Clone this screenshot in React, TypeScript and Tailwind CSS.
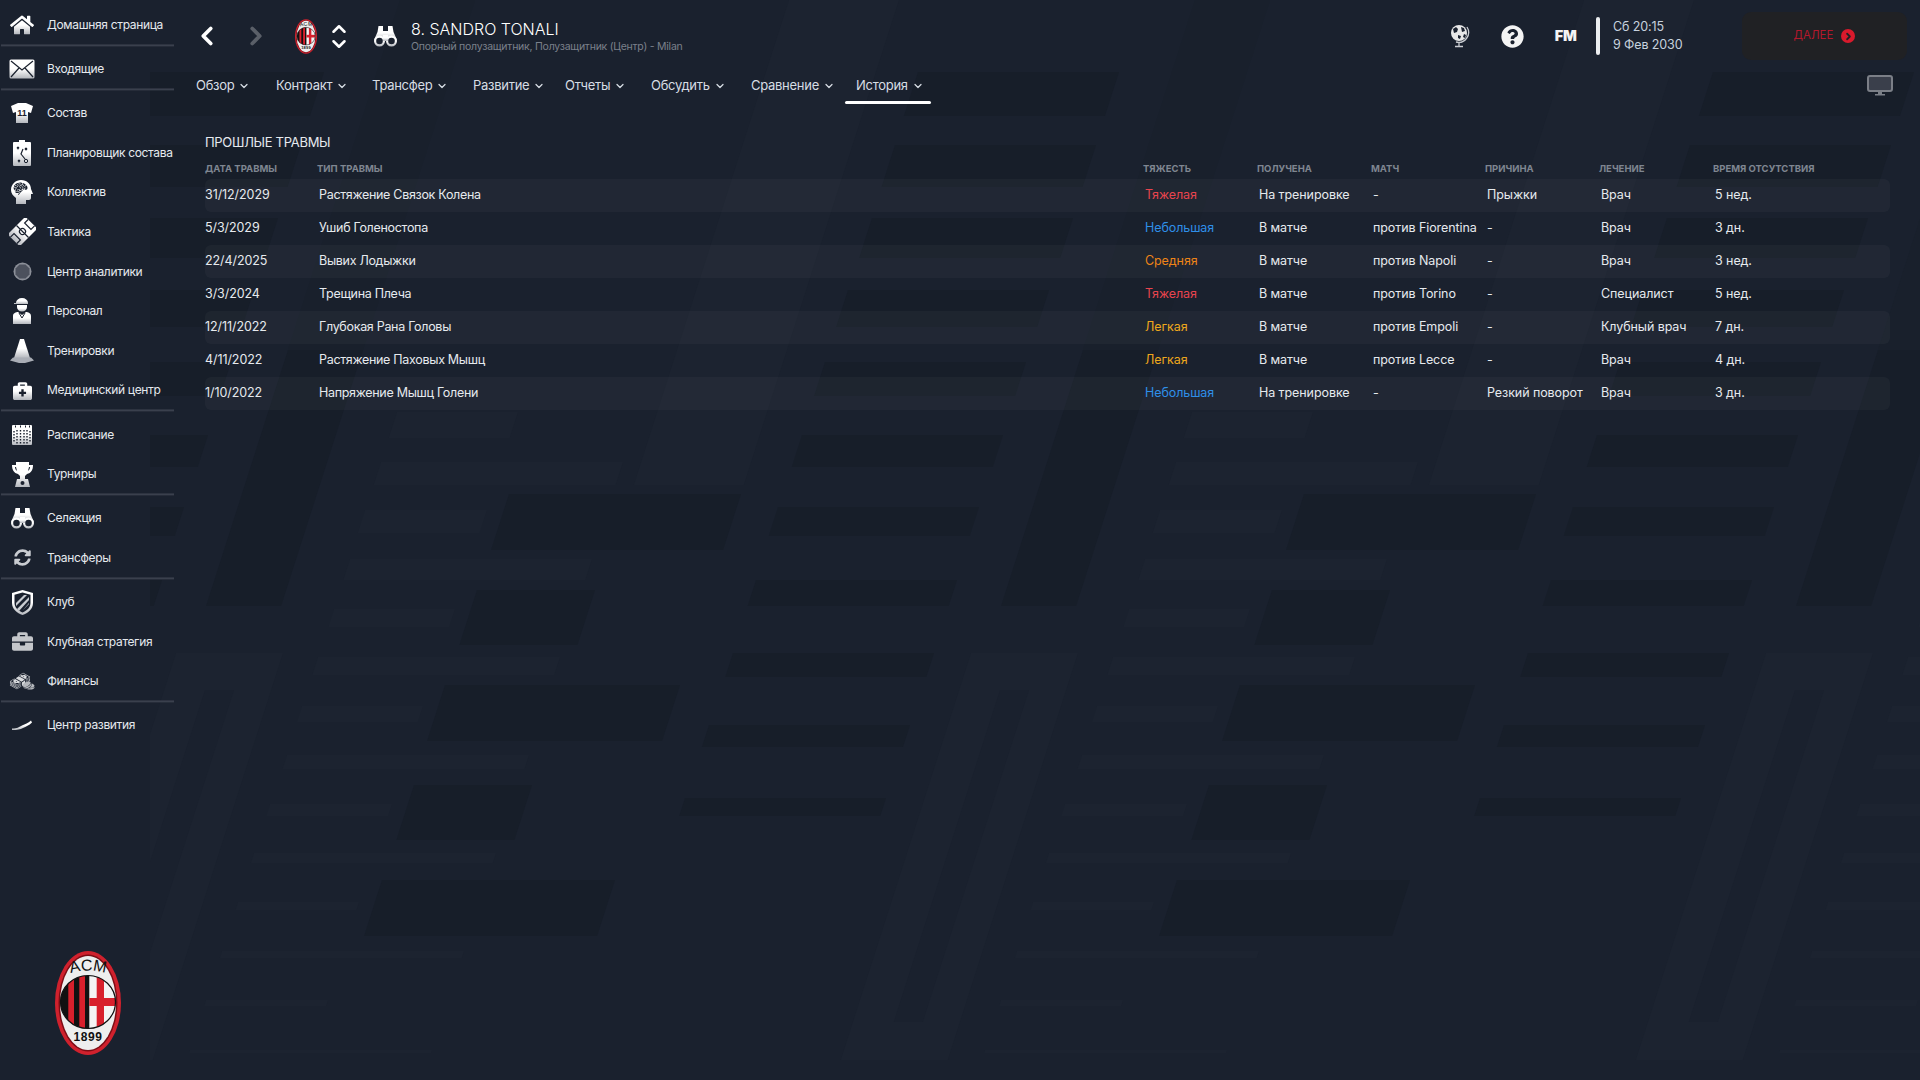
import { ChevronDown, ChevronLeft, ChevronRight, ChevronUp } from 'lucide-react';
import { FaBriefcase, FaBriefcaseMedical, FaHome, FaQuestionCircle, FaSyncAlt } from 'react-icons/fa';
import { GiBrain, GiMoneyStack, GiTwoCoins } from 'react-icons/gi';
import type { ReactNode } from 'react';

const BASE = '#1a212e';
const DARK = '#171e29';
const LIGHT = '#1c2330';
const SLOPE = 0.32;
const PERIOD = 795;

// [x at top edge, y, width, height]
const darkTiles = [
  [509, 494, 232, 56], [477, 590, 118, 55], [445, 685, 235, 56], [414, 785, 118, 55], [382, 880, 233, 56],
  [918, 72, 201, 44], [895, 145, 201, 42], [872, 218, 201, 40], [848, 290, 201, 37], [825, 362, 201, 34],
  [802, 435, 201, 32], [778, 507, 201, 29], [756, 580, 201, 26], [733, 653, 201, 24], [709, 725, 201, 22], [685, 798, 201, 18],
  [288, 350, 75, 256],
];
const lightTiles = [
  [397, 412, 121, 26], [381, 462, 242, 23], [365, 510, 122, 23], [350, 559, 242, 21], [334, 609, 121, 18],
  [318, 657, 242, 18], [302, 706, 121, 16], [287, 755, 242, 14], [270, 804, 122, 12], [254, 853, 242, 10],
  [238, 902, 121, 8], [222, 951, 242, 7], [206, 1000, 122, 6], [190, 1050, 242, 3],
  [789, 0, 110, 485], [176, 653, 107, 407],
];
const faintBars = [[400, 0, 75, 350]];
const innerBars = [[205, 690, 29, 332]];

function tile([x, y, w, h]: number[], offset: number) {
  const left = x + offset;
  const shift = h * SLOPE;
  return `${left},${y} ${left + w},${y} ${left + w - shift},${y + h} ${left - shift},${y + h}`;
}

function Backdrop() {
  const offsets = [-PERIOD, 0, PERIOD, PERIOD * 2];
  return (
    <svg className="absolute left-[150px] top-0 h-[1080px] w-[1770px]" viewBox="150 0 1770 1080">
      {offsets.map((o) => (
        <g key={o}>
          {lightTiles.map((t, i) => <polygon key={i} points={tile(t, o)} fill={LIGHT} />)}
          {faintBars.map((t, i) => <polygon key={i} points={tile(t, o)} fill="#19202c" />)}
          {darkTiles.map((t, i) => <polygon key={i} points={tile(t, o)} fill={DARK} />)}
          {innerBars.map((t, i) => <polygon key={i} points={tile(t, o)} fill={BASE} />)}
        </g>
      ))}
    </svg>
  );
}

function MilanBadge({ className }: { className: string }) {
  return (
    <svg viewBox="0 0 66 104" className={className}>
      <defs>
        <clipPath id="badge-mid"><ellipse cx="33" cy="51" rx="27.5" ry="26.5" /></clipPath>
        <path id="badge-arc" d="M10 24Q33 15 56 24" />
      </defs>
      <ellipse cx="33" cy="52" rx="33" ry="52" fill="#d0212d" />
      <ellipse cx="33" cy="52" rx="29.5" ry="48.5" fill="#7c0d15" />
      <ellipse cx="33" cy="52" rx="28" ry="47" fill="#eeeeee" />
      <g clipPath="url(#badge-mid)">
        <rect x="0" y="20" width="66" height="66" fill="#111111" />
        <rect x="13.3" y="20" width="5.700" height="66" fill="#d8202c" />
        <rect x="24.300" y="20" width="5.700" height="66" fill="#d8202c" />
        <rect x="34.300" y="20" width="28" height="66" fill="#f4f4f4" />
        <rect x="41.700" y="20" width="7.300" height="66" fill="#d8202c" />
        <rect x="34.300" y="47" width="28" height="8" fill="#d8202c" />
      </g>
      <ellipse cx="33" cy="51" rx="27.5" ry="26.5" fill="none" stroke="#111111" strokeWidth="1.200" />
      <text fontFamily="Liberation Sans, sans-serif" fontSize="16" fill="#111111" textAnchor="middle">
        <textPath href="#badge-arc" startOffset="50%">ACM</textPath>
      </text>
      <text x="33" y="90" textAnchor="middle" fontFamily="Liberation Sans, sans-serif" fontWeight="700" fontSize="12" fill="#111111" letterSpacing="0.6">1899</text>
    </svg>
  );
}

function Binoculars() {
  return (
    <svg width="23" height="21" viewBox="0 0 23 21">
      <path d="M4.500 0h4.500v5h5V0h4.500l1 6 3.500 8H0l3.500-8z" fill="url(#icon-fade)" />
      <circle cx="5.500" cy="15" r="5.500" fill="url(#icon-fade)" />
      <circle cx="17.500" cy="15" r="5.500" fill="url(#icon-fade)" />
      <circle cx="5.500" cy="15" r="3.300" fill="#1a212e" />
      <circle cx="17.500" cy="15" r="3.300" fill="#1a212e" />
      <rect x="9" y="9" width="5" height="6" fill="url(#icon-fade)" />
    </svg>
  );
}

const W = 'url(#icon-fade)';
const icons: Record<string, ReactNode> = {
  home: <FaHome size={24} fill={W} />,
  mail: (
    <svg width="26" height="20" viewBox="0 0 26 20">
      <rect x="0.5" y="0.5" width="25" height="19" rx="1.5" fill={W} />
      <path d="M2 2l11 9 11-9M2 18l8-9M24 18l-8-9" fill="none" stroke="#1a212e" strokeWidth="1.2" />
    </svg>
  ),
  shirt: (
    <svg width="22" height="20" viewBox="0 0 22 20">
      <path d="M7 0h8l7 3-2 7-3-1v11H5V9L2 10 0 3z" fill={W} />
      <text x="11" y="13" textAnchor="middle" fontSize="9" fontWeight="700" fontFamily="Liberation Sans, sans-serif" fill="#1a212e">11</text>
    </svg>
  ),
  planner: (
    <svg width="18" height="26" viewBox="0 0 18 26">
      <path d="M6 0h6v2h5a1 1 0 0 1 1 1v22a1 1 0 0 1-1 1H1a1 1 0 0 1-1-1V3a1 1 0 0 1 1-1h5z" fill={W} />
      <path d="M4 7l2 2m0-2L4 9M12 8l2 2m0-2l-2 2M5 20l2 2m0-2l-2 2M10 9l-2 5 4 5" fill="none" stroke="#1a212e" strokeWidth="1.2" />
      <circle cx="13" cy="21" r="1.7" fill="none" stroke="#1a212e" />
    </svg>
  ),
  head: (
    <svg width="22" height="24" viewBox="0 0 22 24">
      <path d="M10 0c6 0 10 4 10 9l2 5h-2v4c0 1-1 2-2 2h-3v4H5v-6C2 16 0 13 0 10 0 4 5 0 10 0z" fill={W} />
      <foreignObject x="2" y="1" width="16" height="14"><GiBrain size={15} color="#1a212e" /></foreignObject>
    </svg>
  ),
  tactics: (
    <svg width="27" height="27" viewBox="0 0 27 27">
      <g transform="rotate(45 13.5 13.5)">
        <rect x="5" y="1" width="17" height="25" fill={W} />
        <path d="M5 13.5h17M9 1v5h9V1M9 26v-5h9v5" fill="none" stroke="#1a212e" strokeWidth="1.2" />
        <circle cx="13.5" cy="13.5" r="3" fill="none" stroke="#1a212e" strokeWidth="1.2" />
      </g>
    </svg>
  ),
  analytics: (
    <svg width="19" height="19" viewBox="0 0 19 19">
      <circle cx="9.5" cy="9.5" r="9" fill="#8b8f98" />
      <path d="M6.5 2.5h6l4 4v6l-4 4h-6l-4-4v-6z" fill="#4c515d" />
    </svg>
  ),
  staff: (
    <svg width="18" height="26" viewBox="0 0 18 26">
      <path d="M3 5a6 5 0 0 1 12 0v1H1V5z" fill={W} />
      <path d="M4 7h10v2a5 4.500 0 0 1-10 0z" fill={W} />
      <path d="M0 26v-8c0-3 3-4 5-4l4 3 4-3c2 0 5 1 5 4v8z" fill={W} />
      <path d="M6 15l3 5 3-5" fill="none" stroke="#1a212e" />
    </svg>
  ),
  cone: (
    <svg width="24" height="24" viewBox="0 0 24 24">
      <path d="M10 0h4l6 19H4z" fill={W} />
      <path d="M3 18.500h18l3 3-9 2.500H9l-9-2.500z" fill="#a9adb5" />
    </svg>
  ),
  medical: <FaBriefcaseMedical size={19} fill={W} />,
  calendar: (
    <svg width="20" height="20" viewBox="0 0 20 20">
      <rect width="20" height="20" rx="1" fill={W} />
      <path d="M3 1.500h1M8 1.500h1M13 1.500h1M17 1.500h1" stroke="#1a212e" strokeWidth="2" />
      <path d="M2 6v12M5 5v14M8.500 5v14M12 5v14M15 5v14M18 6v12" stroke="#1a212e" strokeWidth="1.4" strokeDasharray="1.6 1.4" />
    </svg>
  ),
  trophy: (
    <svg width="21" height="25" viewBox="0 0 21 25">
      <path d="M4 0h13v3h4c0 5-2 8-6 9l-2 2v3h3l2 8H3l2-8h3v-3l-2-2C2 11 0 8 0 3h4z" fill={W} />
      <path d="M3 5h1l1 4C4 8 3 7 3 5zM18 5h-1l-1 4c1-1 2-2 2-4z" fill="#1a212e" />
      <circle cx="10.500" cy="21" r="2" fill="#1a212e" />
    </svg>
  ),
  scouting: <Binoculars />,
  transfers: <FaSyncAlt size={17} fill="#c9ccd1" />,
  shield: (
    <svg width="21" height="25" viewBox="0 0 21 25">
      <path d="M10.500 0l10.500 3v10c0 6-5 10-10.500 12C5 23 0 19 0 13V3z" fill={W} />
      <path d="M10.500 2.500l8 2.300V13c0 4.500-3.500 7.500-8 9.500-4.500-2-8-5-8-9.500V4.800z" fill="#1a212e" />
      <path d="M4 13l8-8h3L4 16zM5 19L17 7v3L7 21zM11 20l6-6v-1z" fill="#c9ccd1" />
    </svg>
  ),
  strategy: <FaBriefcase size={21} fill="#c4c6ca" />,
  finance: (
    <span className="relative flex h-[22px] w-[26px] items-center">
      <GiMoneyStack size={22} color="#d8dadd" />
      <GiTwoCoins size={13} color="#b5b8bd" className="absolute bottom-0 right-0" />
    </span>
  ),
  progress: (
    <svg width="20" height="10" viewBox="0 0 20 10">
      <path d="M0 8.500c6 0 6-1 10-3 3-1.500 6-2 9-5l1 2c-3 3-6 4-9 5.500-3 1.500-5 2-11 2z" fill={W} />
    </svg>
  ),
};

const navGroups = [
  [{ icon: 'home', label: 'Домашняя страница' }],
  [{ icon: 'mail', label: 'Входящие' }],
  [
    { icon: 'shirt', label: 'Состав' },
    { icon: 'planner', label: 'Планировщик состава' },
    { icon: 'head', label: 'Коллектив' },
    { icon: 'tactics', label: 'Тактика' },
    { icon: 'analytics', label: 'Центр аналитики' },
    { icon: 'staff', label: 'Персонал' },
    { icon: 'cone', label: 'Тренировки' },
    { icon: 'medical', label: 'Медицинский центр' },
  ],
  [
    { icon: 'calendar', label: 'Расписание' },
    { icon: 'trophy', label: 'Турниры' },
  ],
  [
    { icon: 'scouting', label: 'Селекция' },
    { icon: 'transfers', label: 'Трансферы' },
  ],
  [
    { icon: 'shield', label: 'Клуб' },
    { icon: 'strategy', label: 'Клубная стратегия' },
    { icon: 'finance', label: 'Финансы' },
  ],
  [{ icon: 'progress', label: 'Центр развития' }],
];

const tabs = [
  { label: 'Обзор', width: 'w-[80px]' },
  { label: 'Контракт', width: 'w-[96px]' },
  { label: 'Трансфер', width: 'w-[101px]' },
  { label: 'Развитие', width: 'w-[92px]' },
  { label: 'Отчеты', width: 'w-[86px]' },
  { label: 'Обсудить', width: 'w-[100px]' },
  { label: 'Сравнение', width: 'w-[105px]' },
  { label: 'История', width: 'w-[86px]' },
];

const columns = ['ДАТА ТРАВМЫ', 'ТИП ТРАВМЫ', 'ТЯЖЕСТЬ', 'ПОЛУЧЕНА', 'МАТЧ', 'ПРИЧИНА', 'ЛЕЧЕНИЕ', 'ВРЕМЯ ОТСУТСТВИЯ'];

const severe = 'text-[#e8444e]';
const minor = 'text-[#2f8fe8]';
const medium = 'text-[#ee8417]';
const light = 'text-[#eda71c]';

const injuries = [
  ['31/12/2029', 'Растяжение Связок Колена', 'Тяжелая', severe, 'На тренировке', '-', 'Прыжки', 'Врач', '5 нед.'],
  ['5/3/2029', 'Ушиб Голеностопа', 'Небольшая', minor, 'В матче', 'против Fiorentina', '-', 'Врач', '3 дн.'],
  ['22/4/2025', 'Вывих Лодыжки', 'Средняя', medium, 'В матче', 'против Napoli', '-', 'Врач', '3 нед.'],
  ['3/3/2024', 'Трещина Плеча', 'Тяжелая', severe, 'В матче', 'против Torino', '-', 'Специалист', '5 нед.'],
  ['12/11/2022', 'Глубокая Рана Головы', 'Легкая', light, 'В матче', 'против Empoli', '-', 'Клубный врач', '7 дн.'],
  ['4/11/2022', 'Растяжение Паховых Мышц', 'Легкая', light, 'В матче', 'против Lecce', '-', 'Врач', '4 дн.'],
  ['1/10/2022', 'Напряжение Мышц Голени', 'Небольшая', minor, 'На тренировке', '-', 'Резкий поворот', 'Врач', '3 дн.'],
];

const gridCols = 'grid grid-cols-[112px_826px_114px_114px_114px_114px_114px_1fr]';

function Sidebar() {
  return (
    <aside className="relative flex w-[174px] shrink-0 flex-col pt-[5px]">
      {navGroups.map((group, g) => (
        <div key={g}>
          {g > 0 && <div className="mb-[2.6px] ml-px h-[2px] -translate-y-[0.6px] bg-[#3a404d]" />}
          {group.map((item) => (
            <div key={item.label} className="flex h-[39.6px] items-center">
              <span className="ml-[6px] mr-[9px] flex w-[32px] shrink-0 justify-center">{icons[item.icon]}</span>
              <span className="whitespace-nowrap text-[12px] tracking-[-0.33px] text-[#e6eaee]">{item.label}</span>
            </div>
          ))}
        </div>
      ))}
      <MilanBadge className="absolute left-[55px] top-[951px] h-[104px] w-[66px]" />
    </aside>
  );
}

function TopBar() {
  return (
    <div className="flex h-[72px] items-center pl-[18px] pr-[13px]">
      <ChevronLeft size={30} strokeWidth={3} className="text-white" />
      <ChevronRight size={30} strokeWidth={3} className="ml-[19px] text-[#5a5f68]" />
      <MilanBadge className="ml-[24px] h-[37px] w-[22px]" />
      <div className="ml-[11px] flex flex-col items-center">
        <ChevronUp size={22} strokeWidth={2.800} className="-mb-[3.500px] text-white" />
        <ChevronDown size={22} strokeWidth={2.800} className="-mt-[3.500px] text-white" />
      </div>
      <span className="ml-[24px]"><Binoculars /></span>
      <div className="ml-[14px]">
        <div className="text-[16px] font-light leading-[22px] text-white">8. SANDRO TONALI</div>
        <div className="text-[10.500px] leading-[14px] tracking-[-0.24px] text-[#7a808b]">Опорный полузащитник, Полузащитник (Центр) - Milan</div>
      </div>
      <div className="ml-auto flex items-center">
        <svg width="20" height="24" viewBox="0 0 20 24">
          <circle cx="9" cy="9" r="8" fill="#e8e8e8" />
          <path d="M3 5l3-2 2 2-1 3-3 1zM11 3l3 1 1 3-3 1zM8 11l3 1-1 3-2-1zM14 10l2 1-1 3-2-1z" fill="#1a212e" />
          <path d="M17 3a10 10 0 0 1-11 15M9 19v3M5 22.500h8" fill="none" stroke="#c9ccd1" strokeWidth="1.300" />
        </svg>
        <FaQuestionCircle size={23} color="#f4f4f4" className="ml-[31px]" />
        <span className="ml-[31px] text-[14.500px] font-black text-[#f4f4f4]">FM</span>
        <div className="ml-[19px] h-[38px] w-[4px] rounded bg-[#eceef0]" />
        <div className="ml-[13px] w-[129px] text-[12.500px] leading-[18.500px] tracking-[-0.12px] text-[#c7d2de]">
          <div>Сб 20:15</div>
          <div>9 Фев 2030</div>
        </div>
        <div className="flex h-[48px] w-[165px] items-center justify-center gap-[8px] rounded-[9px] bg-[#202124] text-[11.500px] text-[#b3182c]">
          ДАЛЕЕ
          <span className="flex h-[14px] w-[14px] items-center justify-center rounded-full bg-[#d91a2c]">
            <ChevronRight size={11} strokeWidth={4} className="text-[#202124]" />
          </span>
        </div>
      </div>
    </div>
  );
}

function Tabs() {
  return (
    <div className="relative flex h-[33px] items-start pl-[22px]">
      {tabs.map((tab) => (
        <div key={tab.label} className={`relative flex h-[28px] items-center gap-[4px] text-[13px] tracking-[-0.28px] text-[#d7dde4] ${tab.width}`}>
          {tab.label}
          <ChevronDown size={12} strokeWidth={2.5} />
          {tab.label === 'История' && <div className="absolute -left-[11px] bottom-[-4px] h-[3px] w-[86px] rounded-sm bg-white" />}
        </div>
      ))}
      <svg width="26" height="22" viewBox="0 0 26 22" className="absolute right-[27px] top-[3px]">
        <rect x="1" y="1" width="24" height="15" rx="2" fill="#3a3f4b" stroke="#7b7f87" strokeWidth="2" />
        <path d="M11 17h4v2h3v1.500H8V19h3z" fill="#7b7f87" />
      </svg>
    </div>
  );
}

function InjuryTable() {
  return (
    <section className="ml-[31px] mr-[30px] mt-[25px]">
      <h2 className="text-[13px] leading-[24px] tracking-[-0.3px] text-[#e6eaee]">ПРОШЛЫЕ ТРАВМЫ</h2>
      <div className={`${gridCols} mt-[7.500px] h-[15px] items-center text-[9.500px] font-bold text-[#7f8691]`}>
        {columns.map((c) => <div key={c} className="whitespace-nowrap">{c}</div>)}
      </div>
      <div className="mt-[2.500px]">
        {injuries.map((row, i) => (
          <div key={row[0]} className={`${gridCols} h-[33px] items-center rounded-md text-[12.500px] tracking-[-0.08px] text-[#e6eaee] ${i % 2 === 0 ? 'bg-white/[0.03]' : ''}`}>
            <div>{row[0]}</div>
            <div className="pl-[2px] tracking-[-0.3px]">{row[1]}</div>
            <div className={`pl-[2px] ${row[3]}`}>{row[2]}</div>
            <div className="pl-[2px]">{row[4]}</div>
            <div className="pl-[2px]">{row[5]}</div>
            <div className="pl-[2px]">{row[6]}</div>
            <div className="pl-[2px]">{row[7]}</div>
            <div className="pl-[2px]">{row[8]}</div>
          </div>
        ))}
      </div>
    </section>
  );
}

export default function App() {
  return (
    <div className="relative flex h-[1080px] w-[1920px] overflow-hidden bg-[#1a212e] font-['Inter',sans-serif]">
      <svg className="absolute h-0 w-0">
        <defs>
          <linearGradient id="icon-fade" x1="0" y1="0" x2="0" y2="1">
            <stop offset="0.5" stopColor="#ffffff" />
            <stop offset="1" stopColor="#b4b7bd" />
          </linearGradient>
        </defs>
      </svg>
      <Backdrop />
      <Sidebar />
      <main className="relative min-w-0 flex-1">
        <TopBar />
        <Tabs />
        <InjuryTable />
      </main>
    </div>
  );
}
